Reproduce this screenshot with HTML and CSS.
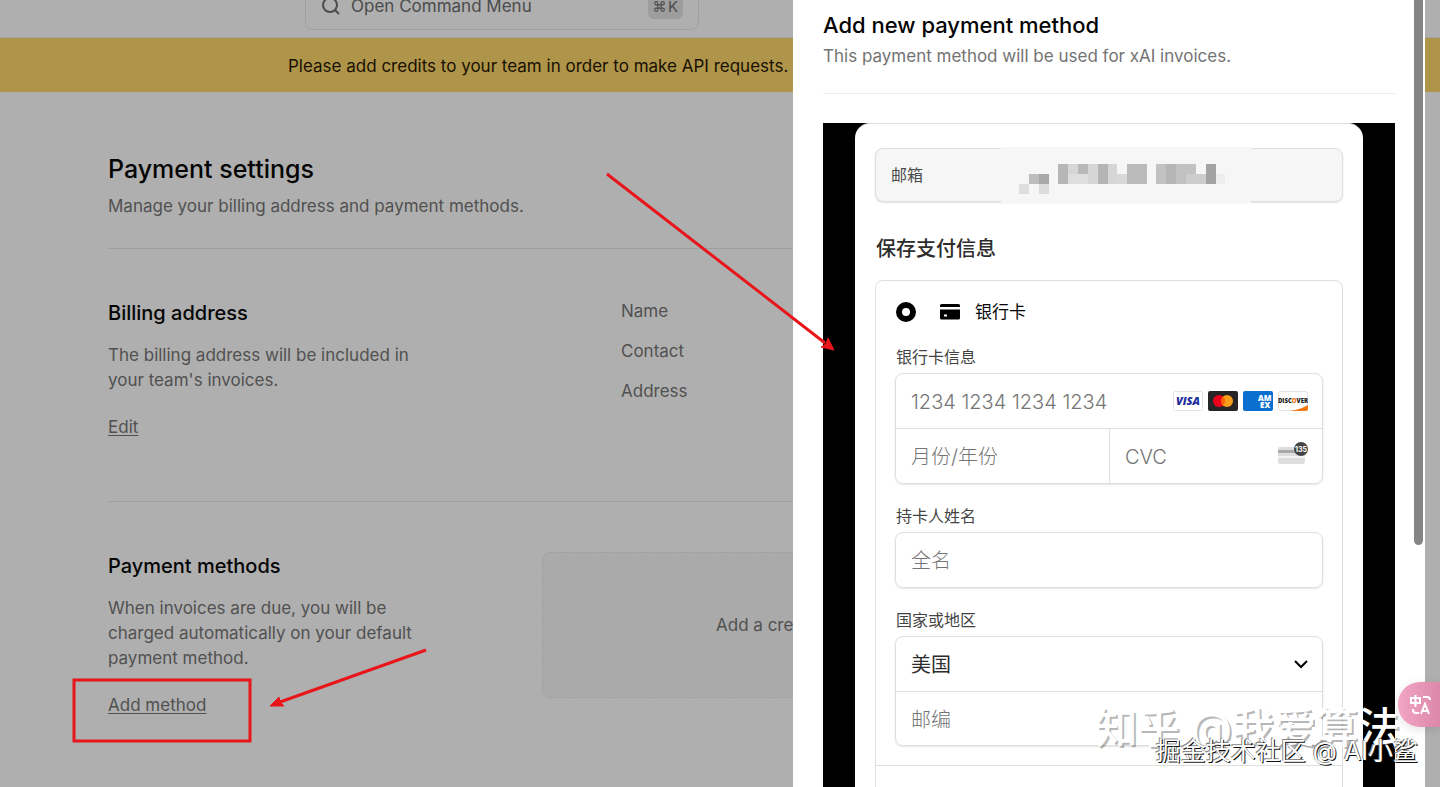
FILE: index.html
```html
<!DOCTYPE html>
<html lang="en">
<head>
  <meta charset="UTF-8">
  <meta name="viewport" content="width=device-width, initial-scale=1.0">
  <title>Payment settings</title>
  <link rel="stylesheet" href="styles.css">
</head>
<body>
  <div class="page">
    <header class="topbar">
      <button class="command" type="button">
        <svg class="command-icon" viewBox="0 0 20 20" width="20" height="20">
          <circle cx="9" cy="9" r="7" />
          <path d="M14 14l4 4" />
        </svg>
        <span>Open Command Menu</span>
        <kbd><svg viewBox="0 0 24 24" width="13" height="13"><path d="M9 9V6a3 3 0 1 0-3 3h12a3 3 0 1 0-3-3v12a3 3 0 1 0 3-3H6a3 3 0 1 0 3 3V9" /></svg>K</kbd>
      </button>
    </header>
    <div class="banner">Please add credits to your team in order to make API requests.</div>

    <main class="settings">
      <div class="intro">
        <h1>Payment settings</h1>
        <p>Manage your billing address and payment methods.</p>
      </div>

      <section class="row">
        <div class="about">
          <h2>Billing address</h2>
          <p>The billing address will be included in your team's invoices.</p>
          <a href="#">Edit</a>
        </div>
        <ul class="details">
          <li>Name</li>
          <li>Contact</li>
          <li>Address</li>
        </ul>
      </section>

      <section class="row">
        <div class="about">
          <h2>Payment methods</h2>
          <p>When invoices are due, you will be charged automatically on your default payment method.</p>
          <a href="#">Add method</a>
        </div>
        <div class="empty">Add a credit card</div>
      </section>
    </main>
  </div>

  <aside class="drawer">
    <div class="drawer-head">
      <h2>Add new payment method</h2>
      <p>This payment method will be used for xAI invoices.</p>
    </div>

    <div class="frame">
      <form class="checkout">
        <div class="email">
          <span>邮箱</span>
          <svg class="mosaic" viewBox="0 0 250 56" width="250" height="56">
            <rect width="250" height="56" fill="#f6f6f6" />
            <rect x="18" y="37" width="10" height="10" fill="#dedede" />
            <rect x="28" y="27" width="10" height="10" fill="#bdbdbd" />
            <rect x="38" y="27" width="10" height="10" fill="#a8a8a8" />
            <rect x="38" y="37" width="10" height="10" fill="#dcdcdc" />
            <rect x="57" y="17" width="59" height="20" fill="#d6d6d6" />
            <rect x="57" y="17" width="10" height="20" fill="#b6b6b6" />
            <rect x="77" y="17" width="10" height="10" fill="#b9b9b9" />
            <rect x="67" y="27" width="20" height="10" fill="#dedede" />
            <rect x="97" y="17" width="10" height="20" fill="#b5b5b5" />
            <rect x="116" y="27" width="10" height="10" fill="#d8d8d8" />
            <rect x="126" y="17" width="20" height="20" fill="#bababa" />
            <rect x="155" y="17" width="40" height="20" fill="#c2c2c2" />
            <rect x="165" y="17" width="10" height="20" fill="#b6b6b6" />
            <rect x="185" y="27" width="20" height="10" fill="#cdcdcd" />
            <rect x="205" y="17" width="10" height="20" fill="#a3a3a3" />
            <rect x="215" y="27" width="9" height="10" fill="#ededed" />
          </svg>
        </div>

        <h3>保存支付信息</h3>

        <div class="method">
          <div class="method-body">
            <label class="choice">
              <input type="radio" name="method" checked>
              <svg viewBox="0 0 20 16" width="20" height="16">
                <path d="M1.500 0h17A1.500 1.500 0 0 1 20 1.500V3H0V1.500A1.500 1.500 0 0 1 1.500 0zM0 5.500h20v8.500a1.500 1.500 0 0 1-1.500 1.500h-17A1.500 1.500 0 0 1 0 14zM4 10.500v2h3v-2z" fill-rule="evenodd" />
              </svg>
              <span>银行卡</span>
            </label>

            <div class="field">
              <label for="number">银行卡信息</label>
              <div class="group">
                <div class="cell">
                  <input id="number" type="text" placeholder="1234 1234 1234 1234">
                  <div class="brands">
                    <svg viewBox="0 0 30 20" width="30" height="20">
                      <rect x=".5" y=".5" width="29" height="19" rx="2" fill="#fff" stroke="#e3e3e6" />
                      <text x="15" y="14" text-anchor="middle" class="visa">VISA</text>
                    </svg>
                    <svg viewBox="0 0 30 20" width="30" height="20">
                      <rect width="30" height="20" rx="2" fill="#252525" />
                      <circle cx="11" cy="10" r="6" fill="#eb001b" />
                      <circle cx="19" cy="10" r="6" fill="#f79e1b" />
                      <path d="M15 5.500a6 6 0 0 1 0 9a6 6 0 0 1 0-9z" fill="#ff5f00" />
                    </svg>
                    <svg viewBox="0 0 30 20" width="30" height="20">
                      <rect width="30" height="20" rx="2" fill="#0a6fcf" />
                      <text x="15" y="10" class="amex">AM</text>
                      <text x="17" y="17" class="amex">EX</text>
                    </svg>
                    <svg viewBox="0 0 30 20" width="30" height="20">
                      <rect x=".5" y=".5" width="29" height="19" rx="2" fill="#fff" stroke="#e3e3e6" />
                      <path d="M12 20c7-1 13-3 18-6v4a2 2 0 0 1-2 2z" fill="#f27712" />
                      <text x="15" y="12" text-anchor="middle" class="discover">DISC<tspan fill="#f27712">O</tspan>VER</text>
                    </svg>
                  </div>
                </div>
                <div class="split">
                  <div class="cell"><input type="text" placeholder="月份/年份" aria-label="月份/年份"></div>
                  <div class="cell">
                    <input type="text" placeholder="CVC" aria-label="CVC">
                    <svg class="cvc" viewBox="0 0 30 22" width="30" height="22">
                      <rect y="5" width="27" height="17" rx="2" fill="#dedede" />
                      <path d="M0 8h27v3H0z" fill="#a9a9a9" />
                      <path d="M0 14h27v2H0z" fill="#f3f3f3" />
                      <circle cx="23" cy="7" r="7" fill="#444" />
                      <text x="23" y="10" text-anchor="middle">135</text>
                    </svg>
                  </div>
                </div>
              </div>
            </div>

            <div class="field">
              <label for="holder">持卡人姓名</label>
              <div class="group">
                <div class="cell"><input id="holder" type="text" placeholder="全名"></div>
              </div>
            </div>

            <div class="field">
              <label for="country">国家或地区</label>
              <div class="group">
                <div class="cell">
                  <select id="country"><option>美国</option></select>
                  <svg class="chevron" viewBox="0 0 14 9" width="14" height="9"><path d="M1 1l6 6 6-6" /></svg>
                </div>
                <div class="cell"><input type="text" placeholder="邮编" aria-label="邮编"></div>
              </div>
            </div>
          </div>
        </div>
      </form>
    </div>
    <div class="scrollbar"></div>
  </aside>

  <button class="translate" type="button" aria-label="Translate">
    <svg viewBox="0 0 24 24" width="24" height="24">
      <path d="M2 5h9v5H2zM6.500 2v12M14 4h4a3 3 0 0 1 3 3M4 16v1a3 3 0 0 0 3 3h3M12 21l4-10 4 10M13.500 18h5" />
    </svg>
  </button>

  <svg class="marks" viewBox="0 0 1440 787" width="1440" height="787">
    <rect x="74" y="680" width="176" height="61" />
    <path d="M426 650L280 702M607 174L825 343" />
    <path class="tip" d="M270 706l9-9 1 5 4 4zM834 350l-13-3 5-3 2-6z" />
  </svg>
  <div class="stamp stamp-large">知乎 @我爱算法</div>
  <div class="stamp stamp-small">掘金技术社区 @ AI小鲨</div>
</body>
</html>
```

FILE: styles.css
```css
* {
  padding: 0;
  margin: 0;
  box-sizing: border-box;
}
body {
  position: relative;
  height: 100vh;
  overflow: hidden;
  background-color: #afafaf;
  color: #050505;
  font: 17px/25px Inter, "Noto Sans CJK SC", sans-serif;
}
ul {
  list-style: none;
}
h1, h2, h3 {
  font-weight: 500;
}
button, input, select {
  border: 0;
  background: none;
  color: inherit;
  font: inherit;
}

/* page behind the drawer */
.topbar {
  display: flex;
  align-items: flex-end;
  height: 38px;
  padding: 0 0 7px 305px;
  border-bottom: 1px solid #a3a3a3;
}
.command {
  display: flex;
  flex-shrink: 0;
  align-items: center;
  gap: 10px;
  width: 394px;
  height: 48px;
  padding: 0 15px;
  border: 1px solid #a0a0a0;
  border-radius: 8px;
  color: #4b4b4b;
}
.command-icon {
  fill: none;
  stroke: #4b4b4b;
  stroke-width: 2;
}
.command kbd {
  display: flex;
  align-items: center;
  gap: 2px;
  height: 25px;
  margin-left: auto;
  padding: 0 5px;
  border-radius: 6px;
  background-color: #9d9d9d;
  font: 15px/25px Inter, sans-serif;
}
.command kbd svg {
  fill: none;
  stroke: #4b4b4b;
  stroke-width: 2;
}
.banner {
  height: 54px;
  padding-left: 288px;
  background-color: #ae954a;
  color: #1a1002;
  line-height: 56px;
  white-space: nowrap;
}
.settings {
  padding: 59px 108px 0;
}
.intro {
  padding-bottom: 29px;
}
.intro h1 {
  margin-bottom: 7px;
  font-size: 25px;
  line-height: 36px;
}
.intro p, .about p, .about a, .details, .empty {
  color: #515151;
}
.row {
  display: grid;
  grid-template-columns: 320px 1fr;
  column-gap: 114px;
  padding: 50px 0 61px;
  border-top: 1px solid #9e9e9e;
}
.about h2 {
  margin-bottom: 16px;
  font-size: 20px;
  line-height: 28px;
}
.about p {
  margin-bottom: 22px;
}
.about a {
  text-underline-offset: 2px;
}
.details {
  display: grid;
  align-content: start;
  gap: 15px;
  padding-left: 79px;
}
.empty {
  height: 146px;
  padding-left: 173px;
  border: 1px dashed #a0a0a0;
  border-radius: 8px;
  background-color: #aaa;
  line-height: 144px;
}

/* drawer */
.drawer {
  position: absolute;
  top: 0;
  right: 15px;
  bottom: 0;
  display: flex;
  flex-direction: column;
  width: 632px;
  max-width: 100%;
  padding: 10px 30px 0;
  background-color: #fff;
}
.drawer-head {
  padding-bottom: 24px;
  border-bottom: 1px solid #ececec;
}
.drawer-head h2 {
  margin-bottom: 4px;
  font-size: 22px;
  line-height: 30px;
}
.drawer-head p {
  color: #737373;
}
.frame {
  flex: 1;
  min-height: 0;
  margin-top: 29px;
  padding: 0 32px;
  background-color: #000;
  overflow: hidden;
}
.checkout {
  height: 900px;
  padding: 24px 20px;
  border-top: 1px solid #ddd;
  border-radius: 15px;
  background-color: #fff;
}
.email {
  display: flex;
  align-items: center;
  height: 54px;
  padding-left: 15px;
  border: 1px solid #dedede;
  border-radius: 8px;
  background-color: #f6f6f6;
  box-shadow: 0 1px 2px #e4e4e4;
  color: #4a4a4a;
  font-size: 16px;
}
.mosaic {
  margin: 0 auto 0 78px;
}
.checkout h3 {
  margin: 32px 0 16px 1px;
  color: #2d2d2d;
  font-size: 20px;
  line-height: 30px;
}
.method {
  border: 1px solid #dedede;
  border-radius: 8px 8px 0 0;
  height: 700px;
}
.method-body {
  padding: 19px;
  border-bottom: 1px solid #dedede;
}
.choice {
  display: flex;
  align-items: center;
  height: 24px;
  margin-bottom: 21px;
}
.choice input {
  appearance: none;
  width: 20px;
  height: 20px;
  margin: 0 24px 0 1px;
  border: 6px solid #000;
  border-radius: 50%;
}
.choice svg {
  margin-right: 15px;
}
.field {
  margin-bottom: 20px;
}
.field:last-child {
  margin-bottom: 0;
}
.field > label {
  display: block;
  margin-bottom: 4px;
  padding-left: 1px;
  color: #444;
  font-size: 16px;
  line-height: 24px;
}
.group {
  border: 1px solid #dedede;
  border-radius: 8px;
  box-shadow: 0 1px 2px #e4e4e4;
}
.cell {
  display: flex;
  align-items: center;
  min-width: 0;
  height: 54px;
  padding: 0 14px 0 15px;
}
.group > * + * {
  border-top: 1px solid #dedede;
}
.split {
  display: grid;
  grid-template-columns: repeat(2, minmax(0, 1fr));
}
.split .cell + .cell {
  border-left: 1px solid #dedede;
}
.cell input, .cell select {
  flex: 1;
  appearance: none;
  min-width: 0;
  height: 100%;
  padding-top: 2px;
  color: #2d2d2d;
  font-size: 20px;
}
.cell input::placeholder {
  color: #757575;
  font-weight: 300;
  opacity: 1;
}
.brands {
  display: flex;
  gap: 5px;
}
.brands text {
  font-family: "Open Sans", sans-serif;
  font-weight: 800;
}
.brands .visa {
  fill: #1c2f9c;
  font-size: 11px;
  font-style: italic;
}
.brands .amex {
  fill: #fff;
  font-size: 8px;
}
.brands .discover {
  fill: #222;
  font-size: 6px;
}
.cvc {
  margin-bottom: 6px;
}
.cvc text {
  fill: #fff;
  font: 700 7px Inter, sans-serif;
}
.chevron {
  fill: none;
  stroke: #000;
  stroke-width: 2;
}
.scrollbar {
  position: absolute;
  top: -8px;
  right: 2px;
  width: 9px;
  height: 553px;
  border-radius: 5px;
  background-color: #858585;
}

/* floating items */
.translate {
  position: absolute;
  top: 682px;
  right: 0;
  width: 42px;
  height: 45px;
  padding-left: 4px;
  border-radius: 22px 0 0 22px;
  background: linear-gradient(90deg, #f2a5c4, #dc88aa);
  box-shadow: 0 2px 10px rgba(0, 0, 0, .12);
  line-height: 0;
}
.translate svg {
  fill: none;
  stroke: #fff;
  stroke-width: 2;
}
.marks {
  position: absolute;
  top: 0;
  left: 0;
  fill: none;
  stroke: #e8151b;
  stroke-width: 3;
  pointer-events: none;
}
.marks .tip {
  fill: #e8151b;
  stroke-width: 1;
}
.stamp {
  position: absolute;
  color: #fff;
  white-space: nowrap;
}
.stamp-large {
  right: 40px;
  bottom: 29px;
  font-size: 42px;
  font-weight: 500;
  line-height: 60px;
  text-shadow: 2px 2px 0 rgba(0, 0, 0, .3);
}
.stamp-small {
  right: 22px;
  bottom: 18px;
  font-size: 25px;
  line-height: 36px;
  text-shadow: 1px 1px 0 #111, -1px -1px 0 #888;
}
```
